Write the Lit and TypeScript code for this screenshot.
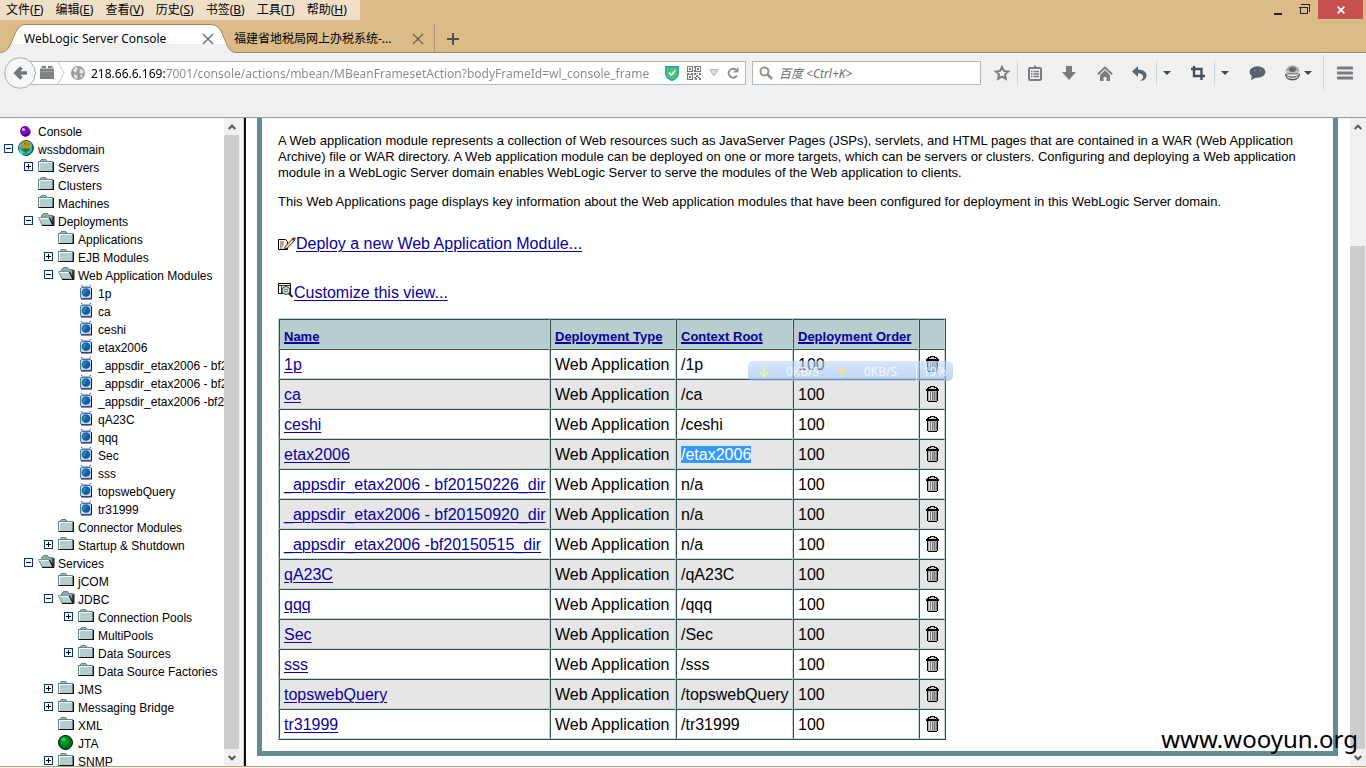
import { LitElement, html, css, svg, nothing } from "lit";
import { customElement, property } from "lit/decorators.js";

type Kind = "ball" | "world" | "folder" | "open" | "app" | "jta";
interface Node { label: string; level: number; kind: Kind; toggle?: "+" | "-"; }

const n = (level: number, kind: Kind, label: string, toggle?: "+" | "-"): Node => ({ level, kind, label, toggle });

const TREE: Node[] = [
  n(0, "ball", "Console"),
  n(0, "world", "wssbdomain", "-"),
  n(1, "folder", "Servers", "+"),
  n(1, "folder", "Clusters"),
  n(1, "folder", "Machines"),
  n(1, "open", "Deployments", "-"),
  n(2, "folder", "Applications"),
  n(2, "folder", "EJB Modules", "+"),
  n(2, "open", "Web Application Modules", "-"),
  n(3, "app", "1p"),
  n(3, "app", "ca"),
  n(3, "app", "ceshi"),
  n(3, "app", "etax2006"),
  n(3, "app", "_appsdir_etax2006 - bf20150226_dir"),
  n(3, "app", "_appsdir_etax2006 - bf20150920_dir"),
  n(3, "app", "_appsdir_etax2006 -bf20150515_dir"),
  n(3, "app", "qA23C"),
  n(3, "app", "qqq"),
  n(3, "app", "Sec"),
  n(3, "app", "sss"),
  n(3, "app", "topswebQuery"),
  n(3, "app", "tr31999"),
  n(2, "folder", "Connector Modules"),
  n(2, "folder", "Startup & Shutdown", "+"),
  n(1, "open", "Services", "-"),
  n(2, "folder", "jCOM"),
  n(2, "open", "JDBC", "-"),
  n(3, "folder", "Connection Pools", "+"),
  n(3, "folder", "MultiPools"),
  n(3, "folder", "Data Sources", "+"),
  n(3, "folder", "Data Source Factories"),
  n(2, "folder", "JMS", "+"),
  n(2, "folder", "Messaging Bridge", "+"),
  n(2, "folder", "XML"),
  n(2, "jta", "JTA"),
  n(2, "folder", "SNMP", "+"),
];

const MODULES: [string, string][] = [
  ["1p", "/1p"],
  ["ca", "/ca"],
  ["ceshi", "/ceshi"],
  ["etax2006", "/etax2006"],
  ["_appsdir_etax2006 - bf20150226_dir", "n/a"],
  ["_appsdir_etax2006 - bf20150920_dir", "n/a"],
  ["_appsdir_etax2006 -bf20150515_dir", "n/a"],
  ["qA23C", "/qA23C"],
  ["qqq", "/qqq"],
  ["Sec", "/Sec"],
  ["sss", "/sss"],
  ["topswebQuery", "/topswebQuery"],
  ["tr31999", "/tr31999"],
];

const MENUS: [string, string][] = [
  ["文件", "F"], ["编辑", "E"], ["查看", "V"], ["历史", "S"], ["书签", "B"], ["工具", "T"], ["帮助", "H"],
];

const TREE_ICONS: Record<Kind, unknown> = {
  ball: svg`<circle cx="7" cy="8" r="5" fill="#7a10b8"/><path d="M3 11a5 5 0 0 0 9-5c0 4-4 7-9 5z" fill="#4a0078"/><circle cx="5.500" cy="6.500" r="1.500" fill="#e9b8ff"/>`,
  world: svg`<circle cx="8" cy="7" r="7.500" fill="#18c0b8" stroke="#444" stroke-width="1"/><path d="M4 1l4-1 4 1.500 1.500 3-2.500 3-5 0L3 5z" fill="#c09820"/><path d="M6 2l1-1 1 2-1 2zM9 2l2 1-1 2z" fill="#6a7a18"/><path d="M3 8.500l3-1h5l1 1.500-2.500 1L8 13l-1.500-2.500z" fill="#54600c"/><path d="M1 8l3 2 1 4-3-2zM2 3l1 1-1 2-1 0z" fill="#30e8d8"/><path d="M14.500 5c1 5-2 9-6 9.500" fill="none" stroke="#0a5a50"/>`,
  folder: svg`<g shape-rendering="crispEdges"><path d="M2 1h1V0h5v1h1v1h6v11H0V2h2z" fill="#5f8787"/><path d="M3 1h5v1H3z" fill="#9fb9b9"/><path d="M1 3h13v9H1z" fill="#b7cdcd"/><path d="M1 3h13v1H1zM1 3h1v9H1z" fill="#f4fafa"/><path d="M15 3h1v10h-1zM1 12h15v1H1z" fill="#111"/></g>`,
  open: svg`<path d="M3.500 11V2.500l2-2h4l1.500 2h4v10z" fill="#8fa9a9" stroke="#5f8787"/><path d="M.5 4.500h10.500l4 7.500H4z" fill="#b7cdcd" stroke="#6f9595"/><path d="M1.500 5.500h9" stroke="#f4fafa"/><path d="M11.500 5l3.500 7V3.500" fill="none" stroke="#111" stroke-width="1.200"/><path d="M4 12.500h12V3" fill="none" stroke="#111"/>`,
  app: svg`<path d="M3 0l2.500 2h5L13 0" fill="none" stroke="#486898"/><rect x="2.500" y="2.500" width="11" height="11" rx="1.500" fill="#c4d8f4" stroke="#4878b0"/><path d="M13.500 3.500v10.500H3" fill="none" stroke="#0c1c50"/><circle cx="8" cy="7.500" r="4.300" fill="#1458d0"/><path d="M4.500 7l2.500-3 1.500 1.500-1.500 3-2 1z" fill="#28a030"/><path d="M8 9l2 .5-1.500 2-2-.5z" fill="#187028"/>`,
  jta: svg`<circle cx="7.500" cy="7.500" r="7" fill="#007414" stroke="#000"/><circle cx="6.500" cy="6" r="4.500" fill="#00982c"/><circle cx="5.500" cy="4.500" r="2" fill="#28d058"/>`,
};

@customElement("tree-row")
export class TreeRow extends LitElement {
  @property({ attribute: false }) node!: Node;

  static styles = css`
    :host { display: block; }
    .row { display: flex; align-items: flex-start; height: 18px; white-space: nowrap; }
    .slot { flex: none; width: 14px; padding: 3px 0 0 4px; height: 15px; }
    .toggle { display: block; width: 9px; height: 9px; padding: 0; border: 0; background: none; }
    .icon { flex: none; width: 16px; height: 16px; overflow: visible; }
    .label { color: #000; text-decoration: none; padding-left: 4px; font: 12px/18px "Liberation Sans", Arial, sans-serif; }
    svg { display: block; }
  `;

  render() {
    const d = this.node;
    return html`<div class="row" style="padding-left:${d.level * 20}px">
      <span class="slot">${d.toggle
        ? html`<button class="toggle" aria-label=${(d.toggle === "+" ? "Expand " : "Collapse ") + d.label}>
            <svg width="9" height="9" viewBox="0 0 9 9" shape-rendering="crispEdges">
              <rect x=".5" y=".5" width="8" height="8" fill="#fff" stroke="#003399"/>
              <path d=${d.toggle === "+" ? "M2 4.500h5M4.500 2v5" : "M2 4.500h5"} stroke="#000"/>
            </svg></button>`
        : nothing}</span>
      <svg class="icon" viewBox="0 0 16 16">${TREE_ICONS[d.kind]}</svg>
      <a class="label" href="#">${d.label}</a>
    </div>`;
  }
}

@customElement("scroll-bar")
export class ScrollBar extends LitElement {
  static styles = css`
    :host { display: flex; flex-direction: column; width: 16px; flex: none; background: #f0f0f0; }
    .end { flex: none; height: 17px; width: 16px; padding: 0; border: 0; background: #f0f0f0; display: grid; place-items: center; }
    .rail { flex: 1; display: flex; flex-direction: column; }
    .thumb { background: #cdcdcd; width: 15px; }
  `;
  @property({ type: Number }) start = 0;

  render() {
    return html`
      <button class="end" aria-label="Scroll up"><svg width="8" height="6" viewBox="0 0 8 6"><path d="M.7 5L4 1.700 7.300 5" fill="none" stroke="#555" stroke-width="2"/></svg></button>
      <div class="rail"><div style="flex:${this.start}"></div><div class="thumb" style="flex:${100 - this.start}"></div></div>
      <button class="end" aria-label="Scroll down"><svg width="8" height="6" viewBox="0 0 8 6"><path d="M.7 1L4 4.300 7.300 1" fill="none" stroke="#555" stroke-width="2"/></svg></button>`;
  }
}

const CARET = svg`<path d="M0 0h8L4 4z" fill="#3f4448"/>`;

@customElement("app-root")
export class AppRoot extends LitElement {
  static styles = css`
    :host { display: flex; flex-direction: column; height: 100vh; overflow: hidden; position: relative; background: #fff; color: #000;
      font-family: "Liberation Sans", Arial, sans-serif; }
    *, *::before, *::after { box-sizing: border-box; }
    svg { display: block; }
    button { padding: 0; border: 0; background: none; font: inherit; color: inherit; }

    .browser { flex: none; font: 12px/20px "Noto Sans", "Noto Sans CJK SC", sans-serif; background: #dbbb88; }
    .title { display: flex; height: 20px; }
    .menu { display: flex; gap: 12px; width: 360px; padding-left: 6px; background: #efdfc8; }
    .menu button { flex: none; white-space: nowrap; line-height: 20px; }
    .window { margin-left: auto; display: flex; padding-right: 3px; }
    .window button { height: 19px; width: 27px; display: grid; place-items: center; }
    .window .close { width: 45px; background: #c75050; }

    .tabs { position: relative; display: flex; height: 34px; padding-top: 4px; border-bottom: 1px solid #fff; }
    .tabshape { position: absolute; left: 0; top: 0; }
    .tabs::after { content: ""; position: absolute; left: 236px; right: 0; bottom: 0; height: 1px; background: #9b8461; }
    .tab { position: relative; display: flex; align-items: center; justify-content: space-between; height: 29px; white-space: nowrap; }
    .tab.active { width: 226px; padding: 0 12px 0 24px; }
    .tab.other { width: 209px; padding: 0 10px 0 8px; border-right: 1px solid #ab956f; }
    .add { width: 36px; display: grid; place-items: center; height: 29px; }

    .nav { display: flex; height: 64px; padding-top: 7px; align-items: flex-start; background: #f0f0f0; border-bottom: 1px solid #999; }
    .back { position: relative; z-index: 1; flex: none; margin-left: 4px; width: 32px; height: 32px; margin-top: -4px; }
    .url { flex: 718 1 0; margin-left: -6px; display: flex; align-items: center; height: 24px; background: #fff; border: 1px solid #adb8c2; padding: 0 6px 0 9px; }
    .url .site { margin: 0 5px 0 0; flex: none; }
    .address { flex: 1; min-width: 0; height: 22px; border: 0; padding: 0; outline: 0; font: inherit; color: transparent;
      background: linear-gradient(90deg, #000 74px, #85888c 74px); -webkit-background-clip: text; background-clip: text; }
    .url .tools { display: flex; align-items: center; gap: 8px; padding-left: 4px; }
    .search { flex: 227 1 0; margin-left: 6px; display: flex; align-items: center; gap: 6px; height: 24px; background: #fff; border: 1px solid #adb8c2; padding-left: 6px; }
    .search input { flex: 1; min-width: 0; height: 22px; border: 0; padding: 0; outline: 0; font: inherit; background: none; }
    .search input::placeholder { color: #6d6d6d; font-style: italic; opacity: 1; }
    .icons { flex: none; display: flex; height: 24px; padding-left: 5px; }
    .icons button { display: grid; place-items: center; width: 36px; height: 24px; }
    .icons .split { width: 34px; border-right: 1px solid #c6d6da; }
    .icons .drop { width: 20px; margin-right: 4px; }
    .icons .star { width: 32px; border-right: 1px solid #c6d6da; }
    .icons .list { width: 33px; }
    .icons .face { display: flex; align-items: center; gap: 3px; width: 48px; padding-left: 9px; }
    .icons .more { width: 43px; height: 36px; margin-top: -6px; border-left: 1px solid #d4d4d4; }

    .frames { flex: 1; min-height: 0; display: flex; }
    .left { display: flex; flex: none; width: 246px; border-right: 2px solid #111; }
    .tree { flex: 1; min-width: 0; overflow: hidden; padding-top: 5px; }
    .grip { width: 4px; background: #f4f4f4; border-right: 1px solid #c8c8c8; }
    .right { flex: 1; min-width: 0; display: flex; }
    .panel { flex: 1; min-width: 0; margin: 0 12px 10px 11px; border: solid #638d8d; border-width: 0 5px 5px; padding: 15px 30px 0 16px; overflow: hidden; }
    .panel p { margin: 0 0 13px; font-size: 13px; line-height: 16px; }
    a { color: #0a00a0; text-underline-offset: 2px; text-decoration-thickness: 1px; }
    .action { display: flex; align-items: center; height: 18px; font-size: 16px; line-height: 18px; }
    .deploy { margin-top: 25px; }
    .customize { margin: 31px 0 16px; }
    .customize svg { align-self: flex-start; margin-top: -3px; }

    .modules { border: 1px solid; border-color: #b8cdcd #2f4f4f #2f4f4f #b8cdcd; border-collapse: separate; border-spacing: 0; table-layout: fixed; width: 668px; font-size: 16px; line-height: 18px; }
    .modules th, .modules td { height: 30px; padding: 2px 4px 0; border: 1px solid; border-color: #2f4f4f #c4d6d6 #c4d6d6 #2f4f4f; text-align: left; white-space: nowrap; }
    .modules th { background: #b8cdcd; font-size: 13px; line-height: 16px; padding-top: 6px; }
    .modules th a { text-decoration-thickness: 2px; text-underline-offset: 1px; }
    .modules tr:nth-child(even) td { background: #e6e6e6; }
    .modules .trash { padding: 0; }
    .trash button { display: grid; place-items: center; width: 100%; }
    .picked { background: #3399ff; color: #fff; }
    .c1 { width: 271px; } .c2 { width: 126px; } .c3 { width: 117px; } .c4 { width: 126px; } .c5 { width: 26px; }

    .speed { position: absolute; left: 748px; top: 361px; width: 205px; height: 20px; display: flex; align-items: center; border-radius: 5px;
      background: linear-gradient(rgba(190, 214, 248, .6), rgba(150, 184, 234, .62)); color: rgba(255, 255, 255, .8); font: 12px/20px "Noto Sans", sans-serif; padding: 2px 0 0 10px; }
    .speed .rate { width: 66px; padding-left: 16px; }
    .speed .load { border-left: 1px solid rgba(255, 255, 255, .6); padding-left: 6px; margin-left: 2px; }
    .mark { position: absolute; right: 8px; bottom: 11px; font: 24px/36px "Noto Sans", sans-serif; color: #000; }
    .status { flex: none; height: 2px; background: #fdf3da; border-top: 1px solid #a8a28f; }
  `;

  private chrome() {
    return html`<header class="browser">
      <div class="title">
        <nav class="menu">${MENUS.map(([t, k]) => html`<button>${t}(<u>${k}</u>)</button>`)}</nav>
        <div class="window">
          <button aria-label="Minimize"><svg width="8" height="16"><path d="M0 11h8v2H0z" fill="#222"/></svg></button>
          <button aria-label="Restore"><svg width="11" height="11" viewBox="0 0 11 11" shape-rendering="crispEdges"><path d="M1 3.500h7v6H1zM0 3h9" fill="none" stroke="#222"/><path d="M2 .5h8.500V8" fill="none" stroke="#222"/></svg></button>
          <button class="close" aria-label="Close"><svg width="8" height="8" viewBox="0 0 8 8"><path d="M.7.7l6.600 6.600M7.300.7L.7 7.300" stroke="#fff" stroke-width="1.800"/></svg></button>
        </div>
      </div>
      <div class="tabs">
        <svg class="tabshape" width="240" height="34" viewBox="0 0 240 34">
          <defs><linearGradient id="g" x1="0" y1="0" x2="0" y2="1"><stop offset="0" stop-color="#fff"/><stop offset=".66" stop-color="#fff"/><stop offset=".66" stop-color="#f0f0f0"/><stop offset="1" stop-color="#f0f0f0"/></linearGradient></defs>
          <path d="M0 32.500C15 32.500 11 4.500 26 4.500H211C226 4.500 223 32.500 236 32.500V34H0z" fill="url(#g)"/>
          <path d="M0 32.500C15 32.500 11 4.500 26 4.500H211C226 4.500 223 32.500 236 32.500H240" fill="none" stroke="#9b8461"/>
        </svg>
        <div class="tab active"><span>WebLogic Server Console</span><button aria-label="Close tab"><svg width="12" height="12" viewBox="0 0 12 12"><path d="M1 1l10 10M11 1L1 11" stroke="#5b6068" stroke-width="1.300"/></svg></button></div>
        <div class="tab other"><span>福建省地税局网上办税系统-...</span><button aria-label="Close tab"><svg width="12" height="12" viewBox="0 0 12 12"><path d="M1 1l10 10M11 1L1 11" stroke="#6b6251" stroke-width="1.300"/></svg></button></div>
        <button class="add" aria-label="New tab"><svg width="12" height="12" viewBox="0 0 12 12"><path d="M0 6h12M6 0v12" stroke="#4f4f4f" stroke-width="2"/></svg></button>
      </div>
      <div class="nav">
        <button class="back" aria-label="Back"><svg width="32" height="32" viewBox="0 0 32 32"><circle cx="16" cy="16" r="15.300" fill="#f6f6f6" stroke="#a6adad"/><path d="M17.500 10.500L12 16l5.500 5.500M12 16h11" fill="none" stroke="#6f757a" stroke-width="3.600"/></svg></button>
        <div class="url">
          <svg class="site" width="46" height="22" viewBox="0 0 46 22"><path d="M0 6.500h14V17H0zM1.500 4h4.500v2H1.500zM8 4h4.500v2H8z" fill="#808386"/><path d="M0 9.500h14" stroke="#9a9da0"/><path d="M18 0l6 11-6 11" fill="none" stroke="#c4c8cc"/>
            <circle cx="38" cy="11" r="7" fill="#9b9b9b"/><path d="M33 8l3-3 2 1-1 3-2 2zM39 6l4 2 1 3-3 1-2-2 1-2zM34 12l3 1 1 3-2 1-2-2zM40 13l3 0-2 3z" fill="#e4e4e4"/></svg>
          <input class="address" aria-label="Address" .value=${"218.66.6.169:7001/console/actions/mbean/MBeanFramesetAction?bodyFrameId=wl_console_frame"}>
          <div class="tools">
            <svg width="14" height="15" viewBox="0 0 14 15"><path d="M.8.8h12.400v7C13.200 11 10 13.500 7 14.200 4 13.500.8 11 .8 7.800z" fill="#4fc466" stroke="#1e9fd0" stroke-width="1.400"/><path d="M3.800 6.500l2.500 2.500L10.300 4.500" fill="none" stroke="#fff" stroke-width="1.700"/></svg>
            <svg width="14" height="14" viewBox="0 0 14 14" shape-rendering="crispEdges"><path d="M.5.5h5v5h-5zM8.500.5h5v5h-5zM.5 8.500h5v5h-5z" fill="none" stroke="#777"/><path d="M2 2h2v2H2zM10 2h2v2h-2zM2 10h2v2H2zM7 0h1v2H7zM7 4h1v2H7zM0 7h2v1H0zM4 7h2v1H4zM7 7h2v2H7zM10 7h1v1h-1zM12 7h2v2h-2zM9 9h2v2H9zM7 11h2v1H7zM11 11h2v1h-2zM8 12h2v2H8zM12 12h2v2h-2z" fill="#777"/></svg>
            <svg width="10" height="8" viewBox="0 0 10 8"><path d="M.7.700h8.600L5 7z" fill="#dcdcf2" stroke="#b0b0b4"/></svg>
            <svg width="12" height="12" viewBox="0 0 12 12"><path d="M10 8.500A4.500 4.500 0 1 1 9 2.700" fill="none" stroke="#8a949c" stroke-width="2"/><path d="M11.500 0v5.500H6z" fill="#8a949c"/></svg>
          </div>
        </div>
        <div class="search">
          <svg width="14" height="14" viewBox="0 0 14 14"><circle cx="5.500" cy="5.500" r="4" fill="none" stroke="#8f8f8f" stroke-width="2"/><path d="M8.500 8.500L13 13" stroke="#8f8f8f" stroke-width="2.500"/></svg>
          <input aria-label="Search" placeholder="百度 <Ctrl+K>">
        </div>
        <div class="icons">
          <button class="star" aria-label="Bookmark"><svg width="16" height="16" viewBox="0 0 16 16"><path d="M8 1.800l1.900 4.100 4.400.5-3.300 3 .9 4.500L8 11.700l-3.900 2.200.9-4.500-3.300-3 4.400-.5z" fill="none" stroke="#787c80" stroke-width="1.900"/></svg></button>
          <button class="list" aria-label="Bookmarks list"><svg width="14" height="16" viewBox="0 0 14 16"><rect x="1" y="3" width="12" height="12" rx="1" fill="none" stroke="#787c80" stroke-width="2"/><path d="M4 4V2h1.500L7 0l1.500 2H10v2z" fill="#787c80"/><path d="M3 6.500h1.500M5.500 6.500h5.500M3 9h1.500M5.500 9h5.500M3 11.500h1.500M5.500 11.500h5.500" stroke="#787c80" stroke-width="1.300"/></svg></button>
          <button aria-label="Downloads"><svg width="14" height="14" viewBox="0 0 14 14"><path d="M4 0h6v6h4l-7 8-7-8h4z" fill="#787c80"/></svg></button>
          <button aria-label="Home"><svg width="16" height="15" viewBox="0 0 16 15"><path d="M.8 8.300L8 1.500l7.200 6.800" fill="none" stroke="#787c80" stroke-width="1.900"/><path d="M3 9l5-4.800L13 9v6H9.500v-4h-3v4H3z" fill="#787c80"/></svg></button>
          <button class="split" aria-label="Undo"><svg width="15" height="15" viewBox="0 0 15 15"><path d="M0 5.500L6 0v3.500c6 0 9 3 8.500 6.500-.3 2-1.500 3.500-3.500 4.500H7.500c3-1 4-2.500 3.500-4.500C10.500 8 8.500 7.500 6 7.500V11z" fill="#596570"/></svg></button>
          <button class="drop" aria-label="Undo menu"><svg width="8" height="4">${CARET}</svg></button>
          <button class="split" aria-label="Screenshot"><svg width="14" height="14" viewBox="0 0 14 14"><path d="M3 0v10h11M0 3h10.500v11" fill="none" stroke="#46505c" stroke-width="2.400"/></svg></button>
          <button class="drop" aria-label="Screenshot menu"><svg width="8" height="4">${CARET}</svg></button>
          <button aria-label="Chat"><svg width="17" height="14" viewBox="0 0 17 14"><ellipse cx="8.500" cy="6" rx="8" ry="5.800" fill="#56626e"/><path d="M3 9l-1 5 6-3z" fill="#56626e"/><path d="M5 4.500h1.500M10.500 4.500H12" stroke="#8e98a2" stroke-width="1.500"/></svg></button>
          <button class="face" aria-label="Extension"><svg width="17" height="16" viewBox="0 0 17 16"><path d="M1.500 6.500C2 3 5 .5 8.500.5S15 3 15.500 6.500z" fill="#a4a4a4"/><ellipse cx="8.500" cy="4.500" rx="3.500" ry="2.500" fill="#666"/><path d="M1 8c1.500 2.500 4 3.500 7.500 3.500S14.500 10.500 16 8c.3 4.500-3 7.500-7.500 7.500S.7 12.500 1 8z" fill="#555"/><path d="M2.500 8.500h12" stroke="#8a8a8a" stroke-width="2"/><path d="M3 11.500c3 2.500 8 2.500 11 0" fill="none" stroke="#ddd" stroke-width="1.300"/></svg><svg width="8" height="4">${CARET}</svg></button>
          <button class="more" aria-label="Menu"><svg width="16" height="14" viewBox="0 0 16 14"><path d="M1 2h14M1 7h14M1 12h14" stroke="#787c80" stroke-width="3" stroke-linecap="round"/></svg></button>
        </div>
      </div>
    </header>`;
  }

  private table() {
    return html`<table class="modules">
      <colgroup><col class="c1"><col class="c2"><col class="c3"><col class="c4"><col class="c5"></colgroup>
      <thead><tr>${["Name", "Deployment Type", "Context Root", "Deployment Order"].map((h) => html`<th><a href="#">${h}</a></th>`)}<th></th></tr></thead>
      <tbody>${MODULES.map(([name, root]) => html`<tr>
        <td><a href="#">${name}</a></td>
        <td>Web Application</td>
        <td>${root === "/etax2006" ? html`<span class="picked">${root}</span>` : root}</td>
        <td>100</td>
        <td class="trash"><button aria-label=${"Delete " + name}><svg width="13" height="16" viewBox="0 0 13 16" shape-rendering="crispEdges">
          <path d="M4 0h5v1h2v1h1v1h1v2H0V3h1V2h1V1h2z" fill="#000"/><path d="M5 1h3v1H5zM3 2h7v1H3z" fill="#ccc"/>
          <path d="M1 5h11v10h-1v1H2v-1H1z" fill="#000"/><path d="M2 5h9v10H2z" fill="#a8a8a8"/><path d="M3 6h1v8H3zM5 6h1v8H5z" fill="#e4e4e4"/><path d="M4 6h1v8H4zM6 6h1v8H6zM8 6h1v8H8zM10 6h1v8h-1z" fill="#777"/></svg></button></td>
      </tr>`)}</tbody>
    </table>`;
  }

  render() {
    return html`${this.chrome()}
      <div class="frames">
        <aside class="left">
          <nav class="tree">${TREE.map((d) => html`<tree-row .node=${d}></tree-row>`)}</nav>
          <scroll-bar></scroll-bar><div class="grip"></div>
        </aside>
        <div class="right">
          <main class="panel">
            <p>A Web application module represents a collection of Web resources such as JavaServer Pages (JSPs), servlets, and HTML pages that are contained in a WAR (Web Application Archive) file or WAR directory. A Web application module can be deployed on one or more targets, which can be servers or clusters. Configuring and deploying a Web application module in a WebLogic Server domain enables WebLogic Server to serve the modules of the Web application to clients.</p>
            <p>This Web Applications page displays key information about the Web application modules that have been configured for deployment in this WebLogic Server domain.</p>
            <div class="action deploy"><svg width="18" height="14" viewBox="0 0 18 14"><path d="M.5 2.500h7l2 2v8h-9z" fill="#fff8e0" stroke="#000"/><path d="M2 5h4M2 7h4M2 9h3M2 11h2" stroke="#555"/><path d="M6 12.500l1.500-3.500L14.500 2l2 1.500L9.500 11z" fill="#f4d8a8" stroke="#000" stroke-width=".8"/><path d="M14 2l2-1.500 1.500 1-1.500 2z" fill="#d81818" stroke="#600" stroke-width=".6"/></svg><a href="#">Deploy a new Web Application Module...</a></div>
            <div class="action customize"><svg width="16" height="18" viewBox="0 0 16 18"><path d="M.5 2.500h12v10H.5z" fill="#fffbe0" stroke="#000"/><path d="M1 4.500h11M3.500 4.500v8" stroke="#333"/><circle cx="8" cy="9.500" r="4" fill="#c4dede" stroke="#444"/><path d="M6 8.500h4M6 10.500h4" stroke="#688"/><path d="M11 12.500l3.500 3.500" stroke="#222" stroke-width="2"/></svg><a href="#">Customize this view...</a></div>
            ${this.table()}
          </main>
          <scroll-bar start="18"></scroll-bar>
        </div>
      </div>
      <div class="status"></div>
      <div class="speed">
        <svg width="12" height="12" viewBox="0 0 12 12"><path d="M6 0v10M1.500 6L6 10.500 10.500 6" fill="none" stroke="#e6eeb0" stroke-width="2"/></svg><span class="rate">0KB/S</span>
        <svg width="12" height="12" viewBox="0 0 12 12"><path d="M6 12V2M1.500 6L6 1.500 10.500 6" fill="none" stroke="#f6dfa0" stroke-width="2"/></svg><span class="rate">0KB/S</span>
        <span class="load">19%</span>
      </div>
      <div class="mark">www.wooyun.org</div>`;
  }
}
